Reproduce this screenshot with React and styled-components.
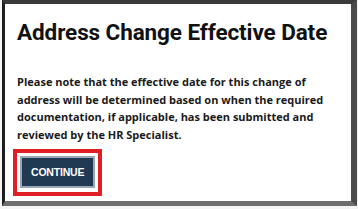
import React from "react";
import styled, { createGlobalStyle } from "styled-components";

const Global = createGlobalStyle`
  html, body { margin: 0; padding: 0; background: #f4f4f4; }
  body { width: 358px; height: 209px; overflow: hidden; }
`;

const Page = styled.div`
  width: 358px;
  height: 209px;
  box-sizing: border-box;
  padding: 0 1px 3px 2px;
  background: #f4f4f4;
`;

const Frame = styled.div`
  box-sizing: border-box;
  height: 206px;
  background: #ffffff;
  border-top: 4px solid #3a3a3a;
  border-left: 3px solid #1e1e1e;
  border-right: 6px solid #4a4a4a;
  border-bottom: 5px solid #6e6e6e;
  padding: 14px 12px 0 12px;
  display: flex;
  flex-direction: column;
`;

const Title = styled.h1`
  margin: 0;
  font-family: Roboto, "Liberation Sans", sans-serif;
  font-weight: 700;
  font-size: 22.5px;
  line-height: 28px;
  color: #111;
  letter-spacing: -0.1px;
`;

const Body = styled.p`
  margin: 27px 0 0 0;
  font-family: "Open Sans", "Liberation Sans", sans-serif;
  font-weight: 700;
  font-size: 11px;
  line-height: 17.7px;
  color: #1a1a1a;
`;

const Highlight = styled.div`
  margin: 5px 0 0 -4px;
  align-self: flex-start;
  border: 4px solid #e01e26;
  padding: 3px 3px 4px 3px;
  display: flex;
`;

const Button = styled.button`
  font-family: "Liberation Sans", Arial, sans-serif;
  font-weight: 700;
  font-size: 10.5px;
  letter-spacing: -0.2px;
  color: #fff;
  background: #1f3a52;
  border: 2px solid #9aa6b3;
  height: 32px;
  padding: 0 9px;
  cursor: pointer;
`;

export default function App() {
  return (
    <>
      <Global />
      <Page>
        <Frame>
          <Title>Address Change Effective Date</Title>
          <Body>
            Please note that the effective date for this change of address will be
            determined based on when the required documentation, if applicable, has
            been submitted and reviewed by the HR Specialist.
          </Body>
          <Highlight>
            <Button>CONTINUE</Button>
          </Highlight>
        </Frame>
      </Page>
    </>
  );
}
